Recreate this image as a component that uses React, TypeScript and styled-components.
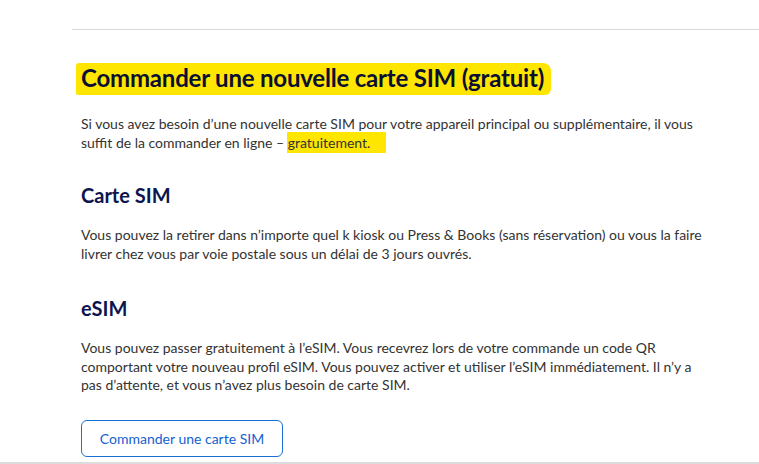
import React from "react";
import styled, { createGlobalStyle } from "styled-components";

const Global = createGlobalStyle`
  html, body { margin: 0; padding: 0; background: #fff; }
  body { font-family: Lato, "Noto Sans", sans-serif; overflow: hidden; }
`;

const Page = styled.div`
  width: 759px;
  height: 464px;
  position: relative;
  box-sizing: border-box;
  border-bottom: 2px solid #dcdcdc;
  overflow: hidden;
`;

const TopRule = styled.div`
  margin-left: 72px;
  margin-top: 29px;
  height: 1px;
  background: #d8d8d8;
`;

const Content = styled.main`
  padding: 32px 0 0 81px;
  width: 660px;
  display: flex;
  flex-direction: column;
  align-items: flex-start;
`;

const Title = styled.h1`
  position: relative;
  margin: 0;
  font-size: 24px;
  font-weight: 700;
  color: #0a0f33;
  letter-spacing: -0.2px;
  line-height: 32px;
  z-index: 0;
`;

const Marker = styled.span`
  position: absolute;
  left: -5px;
  right: -7px;
  top: 1px;
  bottom: -1px;
  background: #ffe600;
  border-radius: 3px 8px 6px 2px;
  z-index: -1;
`;

const Text = styled.p<{ $mt: number }>`
  margin: ${(p) => p.$mt}px 0 0;
  font-size: 14px;
  line-height: 18.7px;
  color: #333;
`;

const Mark = styled.span`
  background: #ffe600;
  padding: 2px 16px 2px 1px;
  margin-left: -1px;
`;

const Sub = styled.h2<{ $mt: number }>`
  margin: ${(p) => p.$mt}px 0 0;
  font-size: 20px;
  font-weight: 700;
  color: #0d1550;
  line-height: 26px;
`;

const Button = styled.button`
  margin-top: 25px;
  width: 202px;
  height: 37px;
  border: 1px solid #1a6fd4;
  border-radius: 6px;
  background: #fff;
  color: #1560d0;
  font-family: inherit;
  font-size: 14px;
  cursor: pointer;
`;

export default function App() {
  return (
    <Page>
      <Global />
      <TopRule />
      <Content>
        <Title>
          <Marker />
          Commander une nouvelle carte SIM (gratuit)
        </Title>
        <Text $mt={21}>
          Si vous avez besoin d’une nouvelle carte SIM pour votre appareil principal ou supplémentaire, il vous
          <br />
          suffit de la commander en ligne – <Mark>gratuitement.</Mark>
        </Text>
        <Sub $mt={30}>Carte SIM</Sub>
        <Text $mt={18}>
          Vous pouvez la retirer dans n’importe quel k kiosk ou Press &amp; Books (sans réservation) ou vous la faire
          <br />
          livrer chez vous par voie postale sous un délai de 3 jours ouvrés.
        </Text>
        <Sub $mt={31}>eSIM</Sub>
        <Text $mt={18}>
          Vous pouvez passer gratuitement à l’eSIM. Vous recevrez lors de votre commande un code QR
          <br />
          comportant votre nouveau profil eSIM. Vous pouvez activer et utiliser l’eSIM immédiatement. Il n’y a
          <br />
          pas d’attente, et vous n’avez plus besoin de carte SIM.
        </Text>
        <Button>Commander une carte SIM</Button>
      </Content>
    </Page>
  );
}
